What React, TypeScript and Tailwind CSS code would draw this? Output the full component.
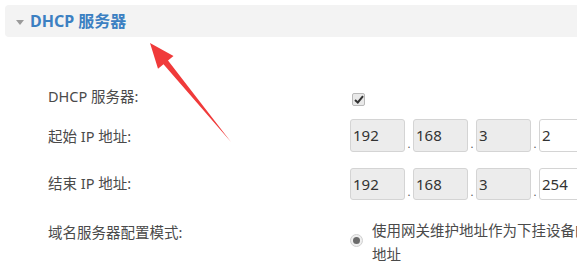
import React from "react";

const font = { fontFamily: '"Noto Sans", "Noto Sans CJK SC", sans-serif' };

function Box({ v, white }: { v: string; white?: boolean }) {
  return (
    <div
      className={`h-full shrink-0 rounded-[3px] border border-[#d4d4d4] pl-[2px] flex items-center text-[15px] text-[#333] ${
        white ? "bg-white w-[60px]" : "bg-[#ececec] w-[55px]"
      }`}
    >
      {v}
    </div>
  );
}

function Dot() {
  return <div className="w-[8px] shrink-0 h-full flex items-end justify-center pb-[3px] text-[11px] text-[#555] leading-none">.</div>;
}

function IpRow({ a, b, c, d }: { a: string; b: string; c: string; d: string }) {
  return (
    <div className="flex h-full shrink-0">
      <Box v={a} />
      <Dot />
      <Box v={b} />
      <Dot />
      <Box v={c} />
      <Dot />
      <Box v={d} white />
    </div>
  );
}

export default function App() {
  return (
    <div className="relative w-[577px] h-[263px] overflow-hidden bg-white" style={font}>
      <div className="ml-[5px] mt-[5px] h-[32px] rounded-l-[4px] bg-[#f3f3f3] flex items-center pl-[11px]">
        <svg width="8" height="5" viewBox="0 0 8 5" className="mr-[6px] mt-[2px]">
          <polygon points="0,0 8,0 4,5" fill="#9a9a9a" />
        </svg>
        <span className="text-[16px] font-bold text-[#3c80c2]">DHCP 服务器</span>
      </div>

      <div className="pl-[48px] text-[14.5px] text-[#4a4a4a]">
        <div className="mt-[51px] h-[22px] flex items-center">
          <div className="w-[302px] shrink-0 -mt-[4px]">DHCP 服务器:</div>
          <div className="w-[13px] h-[13px] ml-[2px] shrink-0 rounded-[2px] border border-[#b9b9b9] bg-[#e9e9e9] flex items-center justify-center">
            <svg width="10" height="9" viewBox="0 0 10 9">
              <path d="M1 5 L3.8 7.5 L9 1.2" stroke="#333" strokeWidth="2" fill="none" />
            </svg>
          </div>
        </div>
        <div className="mt-[9px] h-[33px] flex items-center">
          <div className="w-[302px] shrink-0 mt-[2px]">起始 IP 地址:</div>
          <IpRow a="192" b="168" c="3" d="2" />
        </div>
        <div className="mt-[16px] h-[32px] flex items-center">
          <div className="w-[302px] shrink-0">结束 IP 地址:</div>
          <IpRow a="192" b="168" c="3" d="254" />
        </div>
        <div className="mt-[18px] flex items-start">
          <div className="w-[302px] shrink-0 mt-[4px]">域名服务器配置模式:</div>
          <div className="mt-[16px] w-[13px] h-[13px] shrink-0 rounded-full border border-[#d0d0d0] bg-[#efefef] flex items-center justify-center">
            <div className="w-[7px] h-[7px] rounded-full bg-[#6b6b6b]" />
          </div>
          <div className="ml-[9px] w-[300px] shrink-0 leading-[24px] whitespace-nowrap">
            使用网关维护地址作为下挂设备的
            <br />
            地址
          </div>
        </div>
      </div>

      <svg className="absolute left-0 top-0" width="577" height="263" viewBox="0 0 577 263">
        <polygon
          points="150,43 173.5,56 168,60.5 231,142 163.5,64.3 158,68.7"
          fill="#f03a3a"
        />
      </svg>
    </div>
  );
}
